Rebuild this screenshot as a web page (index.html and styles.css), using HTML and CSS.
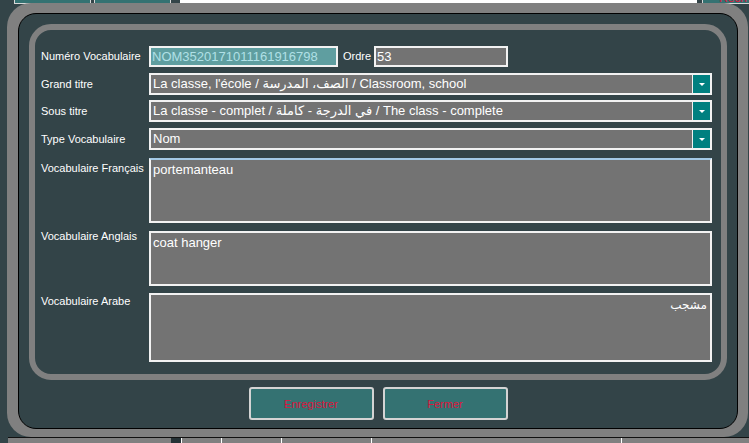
FILE: index.html
```html
<!DOCTYPE html>
<html lang="fr">
<head>
<meta charset="utf-8">
<title>Vocabulaire</title>
<link rel="stylesheet" href="styles.css">
</head>
<body>
  <div class="bg-top">
    <span class="bt bt-1"></span>
    <span class="bt bt-2"></span>
    <span class="bt-white"></span>
    <span class="bt bt-3"><span class="bt-text">Rech</span></span>
  </div>
  <div class="bg-bottom">
    <span class="bb bb-a"></span>
    <span class="bb bb-dark"></span>
    <span class="bb bb-c1"></span>
    <span class="bb bb-c2"></span>
    <span class="bb bb-c3"></span>
    <span class="bb bb-c4"></span>
  </div>

  <div class="dialog">
    <div class="frame">
      <div class="panel">
        <div class="row row-1">
          <span class="lbl">Numéro Vocabulaire</span>
          <div class="tb tb-num">NOM3520171011161916798</div>
          <span class="lbl lbl-ordre">Ordre</span>
          <div class="tb tb-ordre">53</div>
        </div>
        <div class="row row-2">
          <span class="lbl">Grand titre</span>
          <div class="combo"><span class="combo-text">La classe, l'école / الصف، المدرسة / Classroom, school</span><span class="combo-btn"><i class="arrow"></i></span></div>
        </div>
        <div class="row row-3">
          <span class="lbl">Sous titre</span>
          <div class="combo"><span class="combo-text">La classe - complet / في الدرجة - كاملة / The class - complete</span><span class="combo-btn"><i class="arrow"></i></span></div>
        </div>
        <div class="row row-4">
          <span class="lbl">Type Vocabulaire</span>
          <div class="combo"><span class="combo-text">Nom</span><span class="combo-btn"><i class="arrow"></i></span></div>
        </div>
        <div class="row row-ta ta-fr">
          <span class="lbl">Vocabulaire Français</span>
          <div class="ta ta-focus">portemanteau</div>
        </div>
        <div class="row row-ta ta-en">
          <span class="lbl">Vocabulaire Anglais</span>
          <div class="ta">coat hanger</div>
        </div>
        <div class="row row-ta ta-ar">
          <span class="lbl">Vocabulaire Arabe</span>
          <div class="ta ta-rtl" dir="rtl">مشجب</div>
        </div>
      </div>
      <div class="buttons">
        <button class="btn">Enregistrer</button>
        <button class="btn">Fermer</button>
      </div>
    </div>
  </div>
</body>
</html>
```

FILE: styles.css
```css
* { box-sizing: border-box; }
html, body { margin: 0; padding: 0; }
body {
  width: 749px;
  height: 443px;
  overflow: hidden;
  background: #334448;
  font-family: "Liberation Sans", Arial, "DejaVu Sans", sans-serif;
  position: relative;
  display: flex;
  flex-direction: column;
}

/* underlying window, top strip */
.bg-top {
  height: 4px;
  display: flex;
  overflow: hidden;
}
.bt {
  background: #347272;
  border-left: 1px solid #d8d8d8;
  border-right: 1px solid #d8d8d8;
  border-bottom: 1px solid #d8d8d8;
}
.bt-1 { margin-left: 14px; width: 77px; }
.bt-2 { margin-left: 3px; width: 77px; }
.bt-white {
  margin-left: 9px;
  width: 517px;
  background: #ffffff;
  border-bottom: 1px solid #000;
}
.bt-3 { margin-left: 5px; flex: 1; position: relative; border-right: none; }
.bt-text {
  position: absolute;
  left: 16px;
  top: -9px;
  font-size: 12px;
  color: #dc143c;
}

/* underlying window, bottom strip */
.bg-bottom {
  margin-top: auto;
  height: 6px;
  margin-left: 8px;
  border-top: 1px solid #111;
  display: flex;
  background: #808080;
}
.bb { height: 100%; }
.bb-a { width: 163px; }
.bb-dark { width: 11px; background: #263236; border-right: 1px solid #fff; }
.bb-c1 { width: 40px; border-right: 1px solid #fff; }
.bb-c2 { width: 60px; border-right: 1px solid #fff; }
.bb-c3 { width: 90px; border-right: 1px solid #fff; }
.bb-c4 { width: 250px; border-right: 1px solid #fff; }

/* dialog window */
.dialog {
  position: absolute;
  left: 7px;
  top: 3px;
  width: 741px;
  height: 434px;
  background: #808080;
  border-radius: 24px;
  padding: 10px 10px 8px 11px;
}
.frame {
  height: 100%;
  border: 1px solid #000;
  border-radius: 18px;
  background: #334448;
  padding: 10px 10px 0 10px;
  display: flex;
  flex-direction: column;
}
.panel {
  height: 356px;
  border: 6px solid #808080;
  border-radius: 22px;
  padding: 16px 9px 0 6px;
  display: flex;
  flex-direction: column;
}

.row {
  display: flex;
  align-items: center;
}
.row-2 { margin-top: 6px; }
.row-3 { margin-top: 5px; }
.row-4 { margin-top: 6px; }
.row-ta { align-items: flex-start; }
.ta-fr { margin-top: 8px; }
.ta-en { margin-top: 8px; }
.ta-ar { margin-top: 7px; }

.lbl {
  width: 108px;
  flex: none;
  font-size: 11px;
  line-height: 13px;
  color: #ffffff;
  white-space: nowrap;
}
.ta-fr .lbl { margin-top: 4px; }
.ta-en .lbl { margin-top: -1px; }
.ta-ar .lbl { margin-top: 2px; }

.lbl-ordre { width: 31px; margin-left: 5px; }

.tb {
  height: 21px;
  border: 2px solid #f2f2f2;
  font-size: 13px;
  line-height: 17px;
  padding: 0 1px;
  white-space: nowrap;
  overflow: hidden;
}
.tb-num {
  width: 189px;
  background: #5f9ea0;
  color: #b0e0e6;
}
.tb-ordre {
  width: 134px;
  background: #737373;
  color: #ffffff;
}

.combo {
  width: 563px;
  height: 22px;
  border: 2px solid #f2f2f2;
  background: #737373;
  display: flex;
}
.combo-text {
  flex: 1;
  color: #ffffff;
  font-size: 13px;
  line-height: 18px;
  padding-left: 2px;
  white-space: nowrap;
  overflow: hidden;
}
.combo-btn {
  width: 18px;
  flex: none;
  background: #008080;
  border-left: 1px solid #f2f2f2;
  display: flex;
  align-items: center;
  justify-content: center;
}
.arrow {
  display: block;
  width: 0;
  height: 0;
  border-left: 3px solid transparent;
  border-right: 3px solid transparent;
  border-top: 3px solid #ffffff;
  margin-top: 1px;
}

.ta {
  width: 563px;
  border: 2px solid #f2f2f2;
  background: #737373;
  color: #ffffff;
  font-size: 13px;
  line-height: 16px;
  padding: 2px 2px;
}
.ta-fr .ta { height: 65px; }
.ta-en .ta { height: 55px; }
.ta-ar .ta { height: 69px; }
.ta-focus { border-top-color: #a3c9e6; }
.ta-rtl {
  text-align: right;
  font-family: "DejaVu Sans", sans-serif;
  font-size: 12px;
  line-height: 18px;
  padding: 1px 3px 0 2px;
}

.buttons {
  margin-top: 7px;
  display: flex;
  justify-content: center;
  gap: 9px;
}
.btn {
  width: 125px;
  height: 33px;
  background: #347272;
  border: 2px solid #d4d4d4;
  border-radius: 3px;
  color: #dc143c;
  font-family: "Liberation Sans", Arial, sans-serif;
  font-size: 11px;
  padding: 0;
}
```
